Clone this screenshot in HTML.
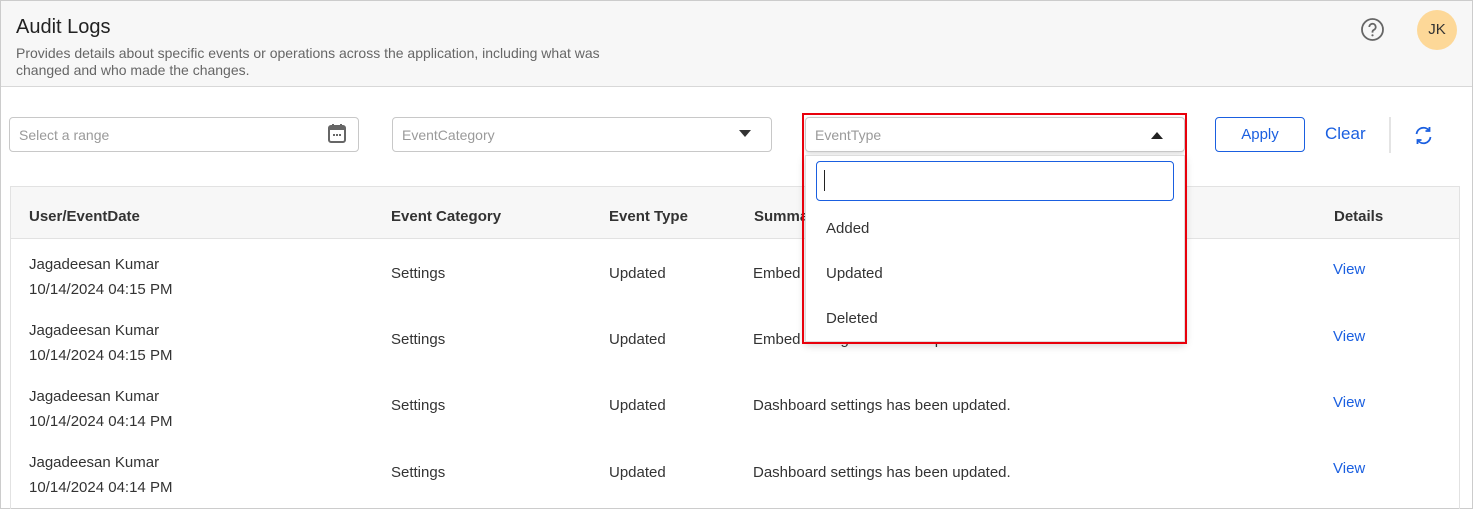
<!DOCTYPE html>
<html><head><style>
*{box-sizing:border-box;margin:0;padding:0}
body{width:1473px;height:509px;overflow:hidden;font-family:"Liberation Sans",Arial,sans-serif;background:#fff;position:relative;color:#333}
.a{position:absolute}
.frame{left:0;top:0;width:1473px;height:509px;border:1px solid #ccc}
.hdr{left:1px;top:1px;width:1471px;height:86px;background:#f7f7f7;border-bottom:1px solid #d8d8d8}
.in{border:1px solid #c8c8c8;border-radius:4px;height:35px;font-size:14px;color:#9a9a9a;padding:9px 9px;background:#fff}
.th{font-size:15px;font-weight:bold;color:#333;top:208px}
.td{font-size:15px;color:#333}
.v{font-size:15px;color:#1a5fe0}
</style></head><body>
<div class="a frame"></div>
<div class="a hdr"></div>
<div class="a" style="left:16px;top:16px;font-size:20px;color:#222">Audit Logs</div>
<div class="a" style="left:16px;top:45px;font-size:14px;color:#666;line-height:17px;width:635px">Provides details about specific events or operations across the application, including what was changed and who made the changes.</div>
<svg class="a" style="left:1360px;top:17px" width="25" height="25" viewBox="0 0 25 25"><circle cx="12.5" cy="12.5" r="10.5" fill="none" stroke="#666" stroke-width="1.8"/><path d="M9.3 10a3.2 3.2 0 1 1 4.5 2.9c-.9.4-1.3 1-1.3 2v.7" fill="none" stroke="#666" stroke-width="1.8"/><circle cx="12.5" cy="18.3" r="1.1" fill="#666"/></svg>
<div class="a" style="left:1417px;top:10px;width:40px;height:40px;border-radius:50%;background:#fdd898;font-size:15px;color:#333;text-align:center;line-height:40px">JK</div>

<div class="a in" style="left:9px;top:117px;width:350px">Select a range</div>
<svg class="a" style="left:327px;top:123px" width="20" height="21" viewBox="0 0 20 21"><rect x="2" y="3" width="16" height="16" rx="2" fill="none" stroke="#666" stroke-width="2"/><rect x="2" y="3" width="16" height="4" fill="#666"/><rect x="5" y="1" width="2" height="4" fill="#666"/><rect x="13" y="1" width="2" height="4" fill="#666"/><rect x="6" y="11" width="2" height="2" fill="#666"/><rect x="9" y="11" width="2" height="2" fill="#666"/><rect x="12" y="11" width="2" height="2" fill="#666"/></svg>
<div class="a in" style="left:392px;top:117px;width:380px">EventCategory</div>
<div class="a" style="left:739px;top:130px;border-left:6px solid transparent;border-right:6px solid transparent;border-top:7px solid #333"></div>

<div class="a" style="left:1215px;top:117px;width:90px;height:35px;border:1px solid #1a5fe0;border-radius:4px;color:#1a5fe0;font-size:15px;text-align:center;line-height:33px">Apply</div>
<div class="a" style="left:1325px;top:124px;font-size:17px;color:#1a5fe0">Clear</div>
<div class="a" style="left:1389px;top:117px;width:2px;height:36px;background:#e4e4e4"></div>
<svg class="a" style="left:1413px;top:125px" width="21" height="21" viewBox="0 0 21 21"><path d="M3.5 9a7 7 0 0 1 12.5-3.5M17.5 12a7 7 0 0 1-12.5 3.5" fill="none" stroke="#1a5fe0" stroke-width="1.8"/><path d="M16.5 2v4h-4M4.5 19v-4h4" fill="none" stroke="#1a5fe0" stroke-width="1.8"/></svg>

<div class="a" style="left:10px;top:186px;width:1450px;height:323px;border:1px solid #e2e2e2;border-bottom:none"></div>
<div class="a" style="left:11px;top:187px;width:1448px;height:52px;background:#f7f7f7;border-bottom:1px solid #e2e2e2"></div>
<div class="a th" style="left:29px">User/EventDate</div>
<div class="a th" style="left:391px">Event Category</div>
<div class="a th" style="left:609px">Event Type</div>
<div class="a th" style="left:754px">Summary</div>
<div class="a th" style="left:1334px">Details</div>

<div class="a td" style="left:29px;top:252px;line-height:25px">Jagadeesan Kumar<br>10/14/2024 04:15 PM</div>
<div class="a td" style="left:391px;top:265px">Settings</div><div class="a td" style="left:609px;top:265px">Updated</div><div class="a td" style="left:753px;top:265px">Embed settings has been updated.</div><div class="a v" style="left:1333px;top:261px">View</div>
<div class="a td" style="left:29px;top:318px;line-height:25px">Jagadeesan Kumar<br>10/14/2024 04:15 PM</div>
<div class="a td" style="left:391px;top:331px">Settings</div><div class="a td" style="left:609px;top:331px">Updated</div><div class="a td" style="left:753px;top:331px">Embed settings has been updated.</div><div class="a v" style="left:1333px;top:328px">View</div>
<div class="a td" style="left:29px;top:384px;line-height:25px">Jagadeesan Kumar<br>10/14/2024 04:14 PM</div>
<div class="a td" style="left:391px;top:397px">Settings</div><div class="a td" style="left:609px;top:397px">Updated</div><div class="a td" style="left:753px;top:397px">Dashboard settings has been updated.</div><div class="a v" style="left:1333px;top:394px">View</div>
<div class="a td" style="left:29px;top:450px;line-height:25px">Jagadeesan Kumar<br>10/14/2024 04:14 PM</div>
<div class="a td" style="left:391px;top:464px">Settings</div><div class="a td" style="left:609px;top:464px">Updated</div><div class="a td" style="left:753px;top:464px">Dashboard settings has been updated.</div><div class="a v" style="left:1333px;top:460px">View</div>

<div class="a in" style="left:805px;top:117px;width:380px;box-shadow:0 1px 3px rgba(0,0,0,.15)">EventType</div>
<div class="a" style="left:1151px;top:132px;border-left:6px solid transparent;border-right:6px solid transparent;border-bottom:7px solid #222"></div>
<div class="a" style="left:805px;top:155px;width:380px;height:187px;background:#fff;border:1px solid #ddd;box-shadow:0 3px 8px rgba(0,0,0,.2)"></div>
<div class="a" style="left:816px;top:161px;width:358px;height:40px;border:1px solid #1a5fe0;border-radius:4px;background:#fff"></div>
<div class="a" style="left:824px;top:170px;width:1px;height:21px;background:#222"></div>
<div class="a td" style="left:826px;top:220px">Added</div>
<div class="a td" style="left:826px;top:265px">Updated</div>
<div class="a td" style="left:826px;top:310px">Deleted</div>
<div class="a" style="left:802px;top:113px;width:385px;height:231px;border:2px solid #e8000b"></div>
</body></html>
